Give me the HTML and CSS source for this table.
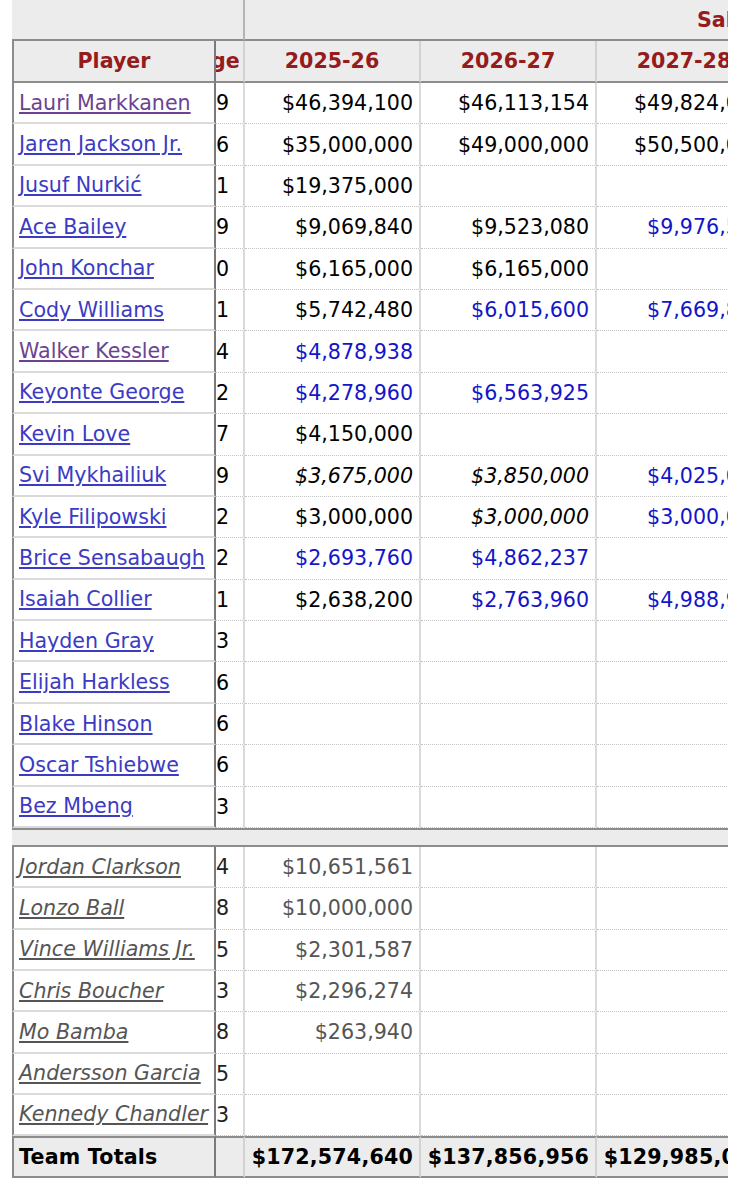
FILE: index.html
```html
<!DOCTYPE html>
<html lang="en">
<head>
<meta charset="utf-8">
<title>Contracts</title>
<link rel="stylesheet" href="styles.css">
</head>
<body>
<div class="wrap">
<table class="contracts">
<colgroup>
<col class="w-player"><col class="w-age"><col class="w-year"><col class="w-year"><col class="w-year">
</colgroup>
<thead>
<tr class="over"><th colspan="2" class="over-blank"></th><th colspan="3" class="over-salary">Salary</th></tr>
<tr class="head"><th class="c-player">Player</th><th class="c-age">ge</th><th>2025-26</th><th>2026-27</th><th>2027-28</th></tr>
</thead>
<tbody class="active">
<tr><td class="c-player"><a class="vis" href="#">Lauri Markkanen</a></td><td class="c-age">9</td><td>$46,394,100</td><td>$46,113,154</td><td>$49,824,000</td></tr>
<tr><td class="c-player"><a href="#">Jaren Jackson Jr.</a></td><td class="c-age">6</td><td>$35,000,000</td><td>$49,000,000</td><td>$50,500,000</td></tr>
<tr><td class="c-player"><a href="#">Jusuf Nurkić</a></td><td class="c-age">1</td><td>$19,375,000</td><td></td><td></td></tr>
<tr><td class="c-player"><a href="#">Ace Bailey</a></td><td class="c-age">9</td><td>$9,069,840</td><td>$9,523,080</td><td class="blue">$9,976,560</td></tr>
<tr><td class="c-player"><a href="#">John Konchar</a></td><td class="c-age">0</td><td>$6,165,000</td><td>$6,165,000</td><td></td></tr>
<tr><td class="c-player"><a href="#">Cody Williams</a></td><td class="c-age">1</td><td>$5,742,480</td><td class="blue">$6,015,600</td><td class="blue">$7,669,890</td></tr>
<tr><td class="c-player"><a class="vis" href="#">Walker Kessler</a></td><td class="c-age">4</td><td class="blue">$4,878,938</td><td></td><td></td></tr>
<tr><td class="c-player"><a href="#">Keyonte George</a></td><td class="c-age">2</td><td class="blue">$4,278,960</td><td class="blue">$6,563,925</td><td></td></tr>
<tr><td class="c-player"><a href="#">Kevin Love</a></td><td class="c-age">7</td><td>$4,150,000</td><td></td><td></td></tr>
<tr><td class="c-player"><a href="#">Svi Mykhailiuk</a></td><td class="c-age">9</td><td class="ital">$3,675,000</td><td class="ital">$3,850,000</td><td class="blue">$4,025,000</td></tr>
<tr><td class="c-player"><a href="#">Kyle Filipowski</a></td><td class="c-age">2</td><td>$3,000,000</td><td class="ital">$3,000,000</td><td class="blue">$3,000,000</td></tr>
<tr><td class="c-player"><a href="#">Brice Sensabaugh</a></td><td class="c-age">2</td><td class="blue">$2,693,760</td><td class="blue">$4,862,237</td><td></td></tr>
<tr><td class="c-player"><a href="#">Isaiah Collier</a></td><td class="c-age">1</td><td>$2,638,200</td><td class="blue">$2,763,960</td><td class="blue">$4,988,952</td></tr>
<tr><td class="c-player"><a href="#">Hayden Gray</a></td><td class="c-age">3</td><td></td><td></td><td></td></tr>
<tr><td class="c-player"><a href="#">Elijah Harkless</a></td><td class="c-age">6</td><td></td><td></td><td></td></tr>
<tr><td class="c-player"><a href="#">Blake Hinson</a></td><td class="c-age">6</td><td></td><td></td><td></td></tr>
<tr><td class="c-player"><a href="#">Oscar Tshiebwe</a></td><td class="c-age">6</td><td></td><td></td><td></td></tr>
<tr><td class="c-player"><a href="#">Bez Mbeng</a></td><td class="c-age">3</td><td></td><td></td><td></td></tr>
</tbody>
<tbody class="sep">
<tr><td colspan="5"></td></tr>
</tbody>
<tbody class="dead">
<tr><td class="c-player"><a href="#">Jordan Clarkson</a></td><td class="c-age">4</td><td>$10,651,561</td><td></td><td></td></tr>
<tr><td class="c-player"><a href="#">Lonzo Ball</a></td><td class="c-age">8</td><td>$10,000,000</td><td></td><td></td></tr>
<tr><td class="c-player"><a href="#">Vince Williams Jr.</a></td><td class="c-age">5</td><td>$2,301,587</td><td></td><td></td></tr>
<tr><td class="c-player"><a href="#">Chris Boucher</a></td><td class="c-age">3</td><td>$2,296,274</td><td></td><td></td></tr>
<tr><td class="c-player"><a href="#">Mo Bamba</a></td><td class="c-age">8</td><td>$263,940</td><td></td><td></td></tr>
<tr><td class="c-player"><a href="#">Andersson Garcia</a></td><td class="c-age">5</td><td></td><td></td><td></td></tr>
<tr><td class="c-player"><a href="#">Kennedy Chandler</a></td><td class="c-age">3</td><td></td><td></td><td></td></tr>
</tbody>
<tfoot>
<tr><td class="c-player">Team Totals</td><td class="c-age"></td><td>$172,574,640</td><td>$137,856,956</td><td>$129,985,000</td></tr>
</tfoot>
</table>
</div>
</body>
</html>
```

FILE: styles.css
```css
body {
  margin: 0;
  background: #ffffff;
  font-family: "DejaVu Sans", Verdana, sans-serif;
  font-size: 20.6px;
  color: #000000;
}

.wrap {
  margin-left: 12px;
  width: 716px;
  overflow: hidden;
}

.contracts {
  table-layout: fixed;
  width: 761px;
  border-collapse: separate;
  border-spacing: 0;
}

.w-player { width: 204px; }
.w-age { width: 29px; }
.w-year { width: 176px; }

.contracts th,
.contracts td {
  padding: 0;
  white-space: nowrap;
  overflow: hidden;
  vertical-align: middle;
}

/* over header */
.contracts .over { height: 41px; }
.contracts .over th {
  background: #ececec;
  border-bottom: 2px solid #8c8c8c;
}
.contracts .over-blank { border-right: 2px solid #b4b4b4; }
.contracts .over-salary {
  text-align: left;
  padding-left: 452px;
  color: #961b1b;
  font-weight: bold;
}

/* column header */
.contracts .head { height: 42px; }
.contracts .head th {
  background: #ececec;
  color: #961b1b;
  font-weight: bold;
  text-align: center;
  border-bottom: 2px solid #8c8c8c;
  border-right: 2px solid #d2d2d2;
}
.contracts .head th.c-player {
  border-left: 2px solid #8c8c8c;
  border-right: 2px solid #7a7a7a;
}
.contracts .head th.c-age {
  text-align: left;
  text-indent: -5px;
}

/* body rows */
.active tr { height: 41.4px; }
.dead tr { height: 41.3px; }

.contracts .active td,
.contracts .dead td {
  text-align: right;
  padding-right: 6px;
  border-bottom: 1px dotted #c4c4c4;
  border-right: 2px solid #dadada;
}

.contracts td.c-player {
  text-align: left;
  padding: 0 0 0 5px;
  border-left: 2px solid #8a8a8a;
  border-right: 2px solid #7a7a7a;
}
.contracts .active td.c-player,
.contracts .dead td.c-player {
  text-align: left;
  padding: 0 0 0 5px;
  border-right: 2px solid #7a7a7a;
  border-bottom: 2px solid #dadada;
}

.contracts .active td.c-age,
.contracts .dead td.c-age,
.contracts tfoot td.c-age {
  text-align: left;
  padding: 0;
}

.contracts a {
  color: #3b3bc4;
  text-decoration: underline;
}
.contracts a.vis { color: #6c4390; }

.contracts .blue { color: #1414c8; }
.contracts .ital { font-style: italic; }

/* separator */
.sep tr { height: 19px; }
.contracts .sep td {
  background: #ececec;
  border-top: 2px solid #8c8c8c;
  border-bottom: 2px solid #8c8c8c;
}

/* released players */
.contracts .dead td { color: #555555; }
.contracts .dead td.c-age { color: #222222; }
.contracts .dead a {
  color: #555555;
  font-style: italic;
}

/* totals */
.contracts tfoot tr { height: 42px; }
.contracts tfoot td {
  background: #ececec;
  font-weight: bold;
  text-align: right;
  padding-right: 6px;
  letter-spacing: 0.2px;
  border-top: 2px solid #8c8c8c;
  border-bottom: 2px solid #8c8c8c;
  border-right: 2px solid #d2d2d2;
}
.contracts tfoot td.c-player {
  text-align: left;
  padding: 0 0 0 5px;
  border-right: 2px solid #7a7a7a;
}
```
